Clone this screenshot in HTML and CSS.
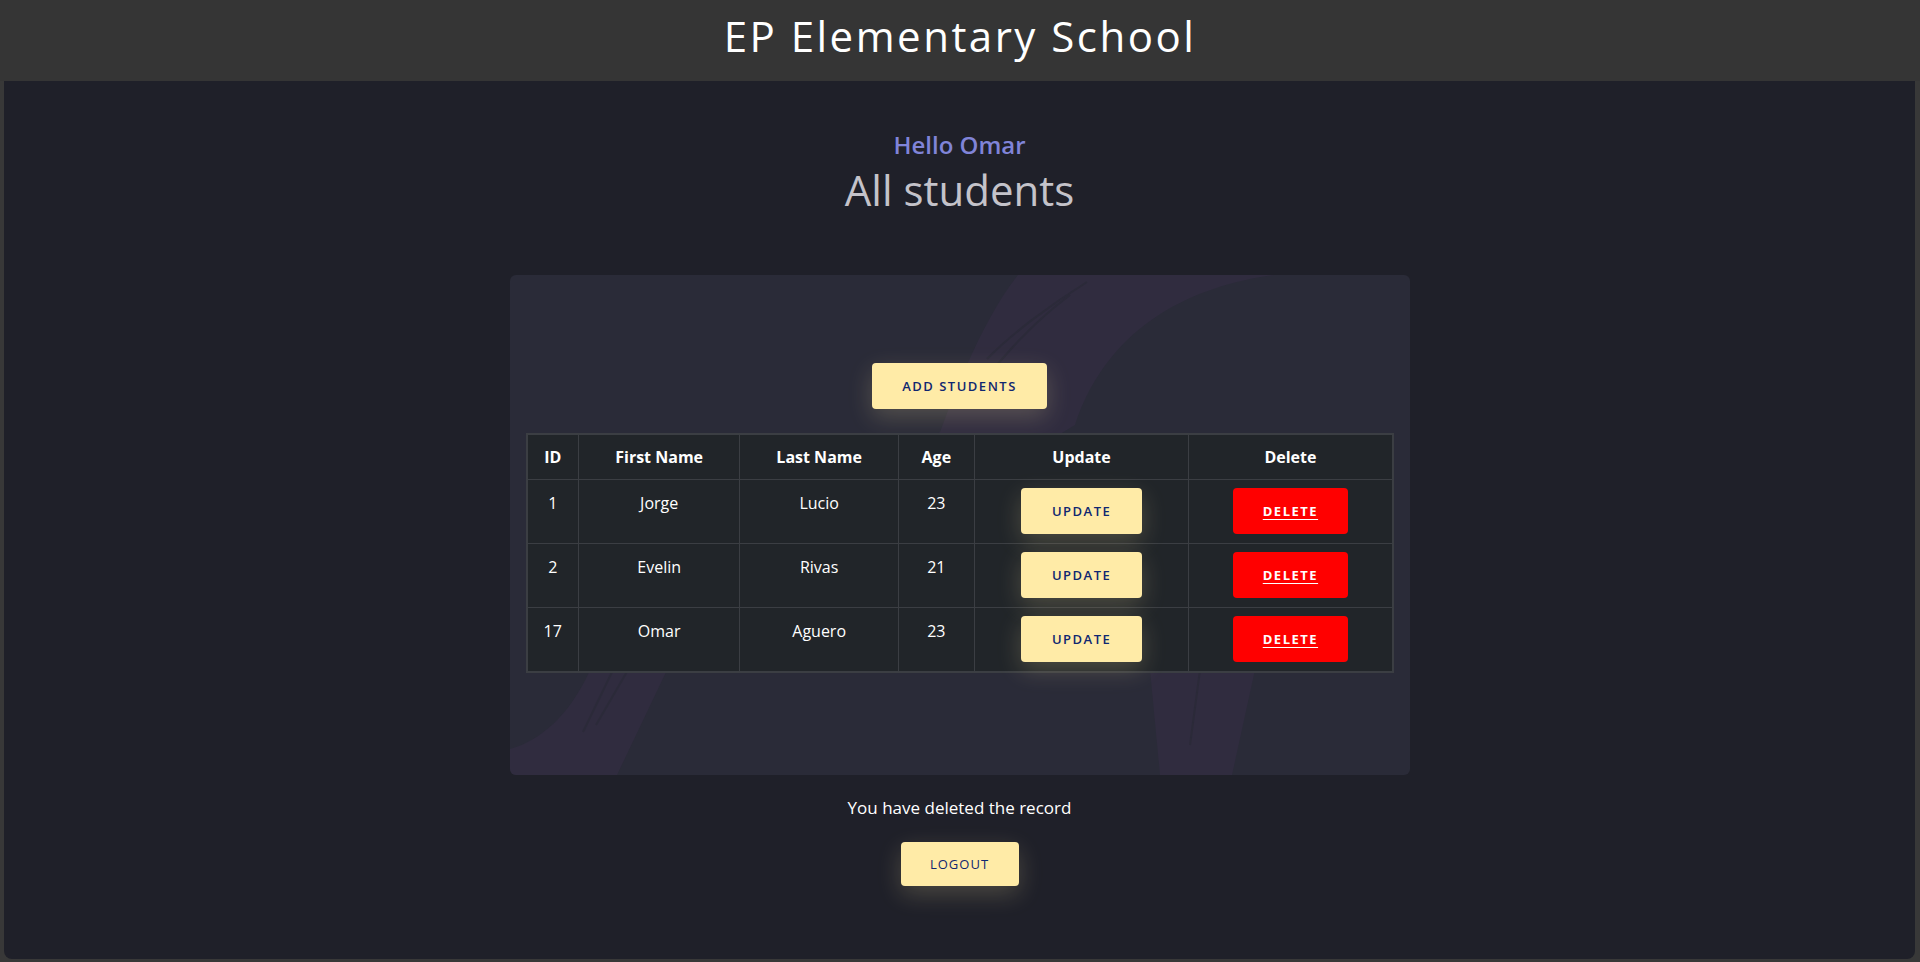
FILE: index.html
```html
<!DOCTYPE html>
<html lang="en">
<head>
<meta charset="utf-8">
<title>EP Elementary School</title>
<link rel="stylesheet" href="styles.css">
</head>
<body>
<div class="window">
  <header class="topbar">
    <h1 class="brand">EP Elementary School</h1>
  </header>
  <main class="content">
    <p class="greet">Hello Omar</p>
    <h2 class="title">All students</h2>
    <section class="card">
      <svg class="card-bg" viewBox="0 0 900 500" preserveAspectRatio="none" aria-hidden="true">
        <path class="band" d="M 508 0 L 764 0 C 690 10 600 45 565 150 L 157 395 L 107 500 L 0 500 L 0 474 C 30 466 60 440 80 395 L 430 157 C 462 70 488 25 508 0 Z"/>
        <path class="band" d="M 640 395 L 745 395 L 722 500 L 650 500 Z"/>
        <path class="streak" d="M 577 7 C 540 30 500 60 477 84"/>
        <path class="streak" d="M 560 20 C 520 50 495 80 470 110"/>
        <path class="streak" d="M 103 395 L 73 457"/>
        <path class="streak" d="M 118 395 L 86 450"/>
        <path class="streak" d="M 690 395 L 680 470"/>
      </svg>
      <a class="btn btn-yellow btn-add" href="#">Add students</a>
      <table class="students">
        <colgroup>
          <col class="c-id"><col class="c-first"><col class="c-last"><col class="c-age"><col class="c-upd"><col class="c-del">
        </colgroup>
        <thead>
          <tr><th>ID</th><th>First Name</th><th>Last Name</th><th>Age</th><th>Update</th><th>Delete</th></tr>
        </thead>
        <tbody>
          <tr>
            <td>1</td><td>Jorge</td><td>Lucio</td><td>23</td>
            <td class="act"><a class="btn btn-yellow btn-update" href="#">Update</a></td>
            <td class="act"><a class="btn btn-delete" href="#">Delete</a></td>
          </tr>
          <tr>
            <td>2</td><td>Evelin</td><td>Rivas</td><td>21</td>
            <td class="act"><a class="btn btn-yellow btn-update" href="#">Update</a></td>
            <td class="act"><a class="btn btn-delete" href="#">Delete</a></td>
          </tr>
          <tr>
            <td>17</td><td>Omar</td><td>Aguero</td><td>23</td>
            <td class="act"><a class="btn btn-yellow btn-update" href="#">Update</a></td>
            <td class="act"><a class="btn btn-delete" href="#">Delete</a></td>
          </tr>
        </tbody>
      </table>
    </section>
    <p class="msg">You have deleted the record</p>
    <a class="btn btn-yellow btn-logout" href="#">Logout</a>
  </main>
</div>
</body>
</html>
```
FILE: styles.css
```css
* { box-sizing: border-box; }

html, body {
  margin: 0;
  height: 100%;
}

body {
  background: #383838;
  font-family: "Open Sans", "Liberation Sans", sans-serif;
  color: #ffffff;
}

.window {
  height: 962px;
  display: flex;
  flex-direction: column;
}

.topbar {
  height: 81px;
  flex: none;
  background: #353535;
  display: flex;
  align-items: center;
  justify-content: center;
  padding-bottom: 10px;
}

.brand {
  margin: 0;
  font-size: 42px;
  line-height: 42px;
  font-weight: 500;
  letter-spacing: 2.5px;
  color: #ffffff;
}

.content {
  flex: 1;
  margin: 0 5px 3px 4px;
  background: #1f2029;
  border-radius: 0 0 8px 8px;
  display: flex;
  flex-direction: column;
  align-items: center;
}

.greet {
  margin: 46px 0 0;
  font-size: 24px;
  line-height: 36px;
  font-weight: 600;
  color: #8084d8;
}

.title {
  margin: 2px 0 0;
  font-size: 42px;
  line-height: 50px;
  font-weight: 500;
  color: #c4c3ca;
}

.card {
  position: relative;
  margin-top: 60px;
  width: 900px;
  height: 500px;
  background: #2a2b38;
  border-radius: 6px;
  overflow: hidden;
  padding: 88px 16px 0;
  display: flex;
  flex-direction: column;
  align-items: center;
  gap: 24px;
}

.card-bg {
  position: absolute;
  top: 0;
  left: 0;
  width: 100%;
  height: 100%;
}

.band { fill: #302c3f; }

.streak {
  fill: none;
  stroke: #2b2a39;
  stroke-width: 2;
}

.btn {
  display: inline-flex;
  align-items: center;
  justify-content: center;
  height: 46px;
  border-radius: 4px;
  font-size: 13px;
  line-height: 1;
  font-weight: 600;
  letter-spacing: 1.5px;
  text-transform: uppercase;
  text-decoration: none;
}

.btn-yellow {
  background: #ffeba7;
  color: #102770;
  box-shadow: 0 8px 24px 0 rgba(255, 235, 167, 0.2);
}

.btn-add {
  position: relative;
  width: 175px;
  flex: none;
}

.btn-update { width: 121px; }

.btn-delete {
  width: 115px;
  background: #ff0000;
  color: #ffffff;
  font-weight: 700;
  text-decoration: underline;
  text-underline-offset: 3px;
}

.btn-logout {
  width: 118px;
  height: 44px;
  margin-top: 22px;
  font-weight: 500;
  letter-spacing: 1px;
}

.students {
  position: relative;
  width: 100%;
  border-collapse: collapse;
  background: #212529;
  border: 2px solid #3b3e43;
  font-size: 16px;
  line-height: 24px;
  text-align: center;
  color: #ffffff;
}

.c-id { width: 52px; }
.c-first { width: 162px; }
.c-last { width: 159px; }
.c-age { width: 76px; }
.c-upd { width: 215px; }
.c-del { width: 204px; }

.students th,
.students td {
  border: 1px solid #3b3e43;
  vertical-align: top;
  padding: 10px 8px;
}

.students th { font-weight: 700; }

.students td {
  font-weight: 500;
  padding-top: 11px;
}

.students td.act {
  padding: 8px 8px 9px;
  vertical-align: middle;
}

.msg {
  margin: 21px 0 0;
  font-size: 17px;
  line-height: 24px;
  font-weight: 500;
  color: #ffffff;
}
```
